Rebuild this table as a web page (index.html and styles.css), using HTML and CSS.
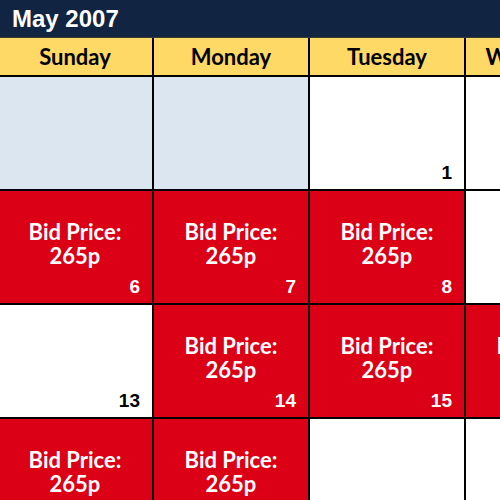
FILE: index.html
```html
<!DOCTYPE html>
<html>
<head>
<meta charset="utf-8">
<link rel="stylesheet" href="styles.css">
</head>
<body>
<div class="title">May 2007</div>
<div class="cal">
  <div class="dow">Sunday</div>
  <div class="dow">Monday</div>
  <div class="dow">Tuesday</div>
  <div class="dow">Wednesday</div>

  <div class="cell blank"></div>
  <div class="cell blank"></div>
  <div class="cell"><span class="num">1</span></div>
  <div class="cell"><span class="num">2</span></div>

  <div class="cell bid"><span class="price">Bid Price:<br>265p</span><span class="num">6</span></div>
  <div class="cell bid"><span class="price">Bid Price:<br>265p</span><span class="num">7</span></div>
  <div class="cell bid"><span class="price">Bid Price:<br>265p</span><span class="num">8</span></div>
  <div class="cell"><span class="num">9</span></div>

  <div class="cell"><span class="num">13</span></div>
  <div class="cell bid"><span class="price">Bid Price:<br>265p</span><span class="num">14</span></div>
  <div class="cell bid"><span class="price">Bid Price:<br>265p</span><span class="num">15</span></div>
  <div class="cell bid"><span class="price">Bid Price:<br>265p</span><span class="num">16</span></div>

  <div class="cell bid"><span class="price">Bid Price:<br>265p</span><span class="num">20</span></div>
  <div class="cell bid"><span class="price">Bid Price:<br>265p</span><span class="num">21</span></div>
  <div class="cell"><span class="num">22</span></div>
  <div class="cell"><span class="num">23</span></div>
</div>
</body>
</html>
```
FILE: styles.css
```css
html, body {
  margin: 0;
  padding: 0;
  width: 500px;
  height: 500px;
  overflow: hidden;
  background: #fff;
}
.title {
  height: 37px;
  background: #112441;
  color: #fff;
  font-family: "Liberation Sans", Arial, sans-serif;
  font-weight: bold;
  font-size: 24px;
  line-height: 38px;
  padding-left: 12px;
  border-bottom: 1px solid #3a3a2a;
}
.cal {
  display: grid;
  grid-template-columns: repeat(4, 154px);
  grid-template-rows: 37px repeat(4, 112px);
  gap: 2px;
  background: #000;
  margin-left: -2px;
  width: 624px;
}
.dow {
  background: #ffd966;
  font-family: Lato, "Open Sans", sans-serif;
  font-weight: bold;
  font-size: 22px;
  display: flex;
  align-items: center;
  justify-content: center;
  color: #000;
}
.cell {
  position: relative;
  background: #fff;
  display: flex;
  align-items: center;
  justify-content: center;
}
.cell.blank { background: #dce6f1; }
.cell.bid { background: #dc0016; color: #fff; }
.price {
  font-family: Lato, "Open Sans", sans-serif;
  font-weight: bold;
  font-size: 22px;
  line-height: 24px;
  text-align: center;
  margin-top: -6px;
}
.num {
  position: absolute;
  right: 12px;
  bottom: 5px;
  font-family: "Liberation Sans", Arial, sans-serif;
  font-weight: bold;
  font-size: 19px;
}
```
